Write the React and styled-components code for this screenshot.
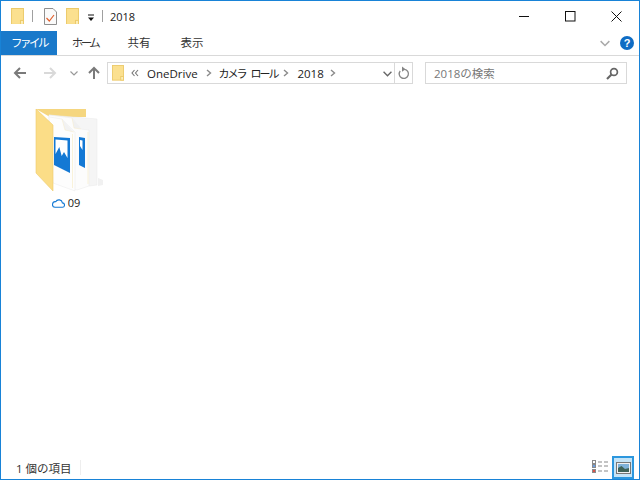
import styled, { createGlobalStyle } from "styled-components";

const GlobalStyle = createGlobalStyle`
  html, body {
    margin: 0;
    padding: 0;
    background: #fff;
  }
  body {
    font-family: "Open Sans", "Noto Sans CJK JP", sans-serif;
  }
`;

const FolderIcon = ({ size = 13 }) => (
  <svg width={size} height={size * 1.3} viewBox="0 0 13 17">
    <rect x="0.5" y="0.5" width="12" height="16" fill="#fbe08f" stroke="#ecca6a" />
    <rect x="9.5" y="12.5" width="3" height="4" fill="#fdeeb8" stroke="#ecca6a" />
  </svg>
);

const TaskIcon = () => (
  <svg width="13" height="17" viewBox="0 0 13 17">
    <path d="M.5.5H9L12.5 4V16.5H.5Z" fill="#fafafa" stroke="#8f8f8f" />
    <path d="M2.5 10L5.3 13L10 7" fill="none" stroke="#e2622f" strokeWidth="1.2" />
  </svg>
);

const DropIcon = () => (
  <svg width="8" height="8" viewBox="0 0 8 8">
    <path d="M1 1H7" stroke="#111" strokeWidth="1" />
    <path d="M1 3.5H7L4 7Z" fill="#111" />
  </svg>
);

const BigFolder = () => (
  <svg width="70" height="84" viewBox="0 0 70 84">
    <path d="M1 1H51V9H15Z" fill="#f5d67f" />
    <path d="M63 78L68 77V72L63 70Z" fill="#f1f1f1" />
    <path d="M14 7L62 11V77L54 78L30 50Z" fill="#f5f5f5" stroke="#e9e9e9" strokeWidth="0.5" />
    <path d="M14 7L37 10L46 21L54 22V78L42 82L14 70Z" fill="#fcfcfc" stroke="#ebebeb" strokeWidth="0.5" />
    <path d="M37 10L39 20L46 21" fill="#f0f0f0" stroke="#f6edd0" strokeWidth="0.6" />
    <path d="M53 24V76" stroke="#f8f0d6" strokeWidth="0.9" />
    <path d="M44 29L50 30V60L44 57Z" fill="#1479d4" />
    <path d="M45 32L47.5 32.5V42L45 38Z" fill="#fff" />
    <path d="M14 9L27 11L40 24V83L18 75Z" fill="#fdfdfd" stroke="#ebebeb" strokeWidth="0.5" />
    <path d="M27 11L30 22L39 24" fill="#f2f2f2" stroke="#f6edd0" strokeWidth="0.6" />
    <path d="M37.5 26V80" stroke="#f8f0d6" strokeWidth="0.9" />
    <path d="M19 29L35 30V65L19 57Z" fill="#1479d4" />
    <path d="M20.5 31.5L32.5 32.5V50L29 44L26.7 48L24.3 39L20.5 46Z" fill="#fff" />
    <path d="M1 1L18 17V83L1 65Z" fill="#fbdd87" stroke="#efcb6c" strokeWidth="0.6" />
  </svg>
);

const ArrowIcon = ({ $dir = "left", color = "#7a7a7a" }) => {
  const d = {
    left: "M13 7H2M7 2L2 7L7 12",
    right: "M1 7H12M7 2L12 7L7 12",
    up: "M7 13V2M2 7L7 2L12 7",
  }[$dir];
  return (
    <svg width="14" height="14" viewBox="0 0 14 14">
      <path d={d} fill="none" stroke={color} strokeWidth="2" />
    </svg>
  );
};

const Chevron = ({ size = 8, color = "#888" }) => (
  <svg width={size} height={size} viewBox="0 0 8 8">
    <path d="M0.5 2.5L4 6L7.5 2.5" fill="none" stroke={color} strokeWidth="1.2" />
  </svg>
);

const Crumb = () => (
  <svg width="6" height="8" viewBox="0 0 6 8">
    <path d="M1 1L4.5 4L1 7" fill="none" stroke="#8a8a8a" strokeWidth="1.4" />
  </svg>
);

const DoubleCrumb = () => (
  <svg width="8" height="8" viewBox="0 0 8 8">
    <path d="M3.5 1L1 4L3.5 7M7 1L4.5 4L7 7" fill="none" stroke="#777" strokeWidth="1.1" />
  </svg>
);

const Refresh = () => (
  <svg width="13" height="14" viewBox="0 0 13 14">
    <path d="M7.5 3.3A4.6 4.6 0 1 1 3.2 5" fill="none" stroke="#858585" strokeWidth="1.3" />
    <path d="M5 .5L8.5 3.3L5 5.8Z" fill="#858585" />
  </svg>
);

const Magnifier = () => (
  <svg width="13" height="13" viewBox="0 0 13 13">
    <circle cx="8" cy="5" r="3.4" fill="none" stroke="#666" strokeWidth="1.7" />
    <path d="M5.5 7.5L1 12" stroke="#666" strokeWidth="2.1" />
  </svg>
);

const Cloud = () => (
  <svg width="13" height="10" viewBox="0 0 13 10">
    <path
      d="M3 9.3H10.2A2.2 2.2 0 0 0 10.4 4.9A3.6 3.6 0 0 0 3.7 3.7A2.8 2.8 0 0 0 3 9.3Z"
      fill="none"
      stroke="#1479d4"
      strokeWidth="1.1"
    />
  </svg>
);

const DetailsView = () => (
  <svg width="17" height="13" viewBox="0 0 17 13">
    <rect x="0.5" y="0.5" width="3" height="3" fill="#fff" stroke="#8a8a8a" />
    <rect x="0.5" y="4.5" width="3" height="3" fill="#6d9fe0" stroke="#8a8a8a" />
    <rect x="0.5" y="9.5" width="3" height="3" fill="#d9534a" stroke="#8a8a8a" />
    <path d="M6 2H10M12 2H16M6 6H10M12 6H16M6 11H10M12 11H16" stroke="#8a8a8a" strokeWidth="1.2" />
  </svg>
);

const LargeView = () => (
  <svg width="15" height="12" viewBox="0 0 15 12">
    <rect x="0.5" y="0.5" width="14" height="11" fill="#f1f1f1" stroke="#777" />
    <rect x="2" y="2" width="11" height="8" fill="#7fb2d9" />
    <path d="M2 10V6L5.5 4L9 7L13 6V10Z" fill="#3f6358" />
  </svg>
);

const Window = styled.div`
  width: 640px;
  height: 480px;
  box-sizing: border-box;
  border: 1px solid #1883d7;
  background: #fff;
  display: flex;
  flex-direction: column;
  overflow: hidden;
  color: #1a1a1a;
`;

const TitleBar = styled.div`
  height: 30px;
  display: flex;
  align-items: center;
  padding-left: 10px;
  flex: none;
`;

const QuickSlot = styled.div`
  display: flex;
  align-items: center;
  justify-content: center;
  width: ${(p) => p.$w || 13}px;
  margin-right: ${(p) => p.$mr || 0}px;
  padding-top: ${(p) => p.$pt || 0}px;
`;

const TitleSep = styled.div`
  width: 1px;
  height: 12px;
  background: #a0a0a0;
  margin-right: ${(p) => p.$mr}px;
`;

const TitleText = styled.span`
  font-size: 11px;
  flex: 1;
`;

const WinButton = styled.div`
  width: 46px;
  height: 30px;
  display: flex;
  align-items: center;
  justify-content: center;
`;

const RibbonTabs = styled.div`
  height: 24px;
  display: flex;
  align-items: stretch;
  border-bottom: 1px solid #d9d9d9;
  flex: none;
`;

const Tab = styled.div`
  width: ${(p) => p.$w}px;
  box-sizing: border-box;
  padding-bottom: 2px;
  display: flex;
  align-items: center;
  justify-content: center;
  font-size: 11.5px;
  letter-spacing: ${(p) => (p.$kana ? "-2.5px" : "0")};
  font-family: "Noto Sans CJK JP", sans-serif;
  background: ${(p) => (p.$active ? "#1979ca" : "transparent")};
  color: ${(p) => (p.$active ? "#fff" : "#333")};
`;

const RibbonRight = styled.div`
  margin-left: auto;
  display: flex;
  align-items: center;
  gap: 10px;
  padding-right: 5px;
`;

const Help = styled.div`
  width: 14px;
  height: 14px;
  border-radius: 50%;
  background: #0f6cc4;
  color: #fff;
  font: bold 11px "Liberation Sans", sans-serif;
  display: flex;
  align-items: center;
  justify-content: center;
`;

const NavRow = styled.div`
  height: 22px;
  margin-top: 6px;
  display: flex;
  align-items: center;
  flex: none;
`;

const NavButton = styled.div`
  width: ${(p) => p.$w}px;
  display: flex;
  justify-content: center;
`;

const AddressBox = styled.div`
  width: 306px;
  height: 22px;
  box-sizing: border-box;
  border: 1px solid #d9d9d9;
  display: flex;
  align-items: center;
  margin-left: 4px;
  padding-left: 4px;
`;

const Path = styled.div`
  flex: 1;
  display: flex;
  align-items: center;
  font-size: 11.5px;
  font-family: "Open Sans", "Noto Sans CJK JP", sans-serif;
  color: #222;
`;

const PathText = styled.span`
  margin-left: ${(p) => p.$ml || 0}px;
  font-size: ${(p) => (p.$kana ? "11px" : "inherit")};
  letter-spacing: ${(p) => (p.$kana ? "-2px" : "0")};
  word-spacing: ${(p) => (p.$kana ? "4px" : "0")};
  white-space: pre;
`;

const CrumbSlot = styled.span`
  display: flex;
  margin-left: ${(p) => p.$ml}px;
`;

const AddressEnd = styled.div`
  width: 17px;
  height: 20px;
  display: flex;
  align-items: center;
  justify-content: center;
  border-left: 1px solid #d9d9d9;
`;

const ComboArrow = styled.div`
  width: 14px;
  display: flex;
  justify-content: center;
`;

const SearchBox = styled.div`
  width: 202px;
  height: 22px;
  box-sizing: border-box;
  margin-left: 12px;
  border: 1px solid #d9d9d9;
  display: flex;
  align-items: center;
  justify-content: space-between;
  padding: 0 7px 0 8px;
  font-size: 11.5px;
  color: #777;
`;

const Content = styled.div`
  flex: 1;
  padding: 24px 0 0 26px;
`;

const Item = styled.div`
  width: 78px;
  display: flex;
  flex-direction: column;
  align-items: flex-start;
`;

const IconWrap = styled.div`
  height: 84px;
  padding-left: 8px;
`;

const ItemLabel = styled.div`
  width: 78px;
  display: flex;
  align-items: center;
  justify-content: center;
  gap: 3px;
  font-size: 11px;
  margin-top: 3px;
`;

const StatusBar = styled.div`
  height: 23px;
  display: flex;
  align-items: center;
  flex: none;
`;

const StatusText = styled.div`
  font-size: 11.5px;
  margin-left: 15px;
  width: 64px;
  color: #333;
`;

const StatusSep = styled.div`
  width: 1px;
  height: 15px;
  background: #eee;
`;

const ViewButtons = styled.div`
  margin-left: auto;
  display: flex;
  align-items: flex-end;
  padding-right: 5px;
`;

const ViewButton = styled.div`
  width: 22px;
  height: 23px;
  box-sizing: border-box;
  display: flex;
  align-items: center;
  justify-content: center;
  margin-left: 1px;
  padding-bottom: ${(p) => (p.$active ? "0" : "3px")};
  border: 2px solid ${(p) => (p.$active ? "#2c97de" : "transparent")};
  background: ${(p) => (p.$active ? "#c5e4f7" : "transparent")};
`;

const App = () => {
  return (
    <>
      <GlobalStyle />
      <Window>
        <TitleBar>
          <QuickSlot $mr={8}><FolderIcon /></QuickSlot>
          <TitleSep $mr={11} />
          <QuickSlot $mr={9}><TaskIcon /></QuickSlot>
          <QuickSlot $mr={7}><FolderIcon /></QuickSlot>
          <QuickSlot $w={10} $mr={6} $pt={3}><DropIcon /></QuickSlot>
          <TitleSep $mr={7} />
          <TitleText>2018</TitleText>
          <WinButton>
            <svg width="11" height="11" viewBox="0 0 11 11">
              <path d="M0 5.5H10" stroke="#111" />
            </svg>
          </WinButton>
          <WinButton>
            <svg width="11" height="11" viewBox="0 0 11 11">
              <rect x="0.5" y="0.5" width="9.5" height="9.5" fill="none" stroke="#111" />
            </svg>
          </WinButton>
          <WinButton>
            <svg width="11" height="11" viewBox="0 0 11 11">
              <path d="M.5.5L10.5 10.5M10.5.5L.5 10.5" stroke="#111" />
            </svg>
          </WinButton>
        </TitleBar>
        <RibbonTabs>
          <Tab $active $kana $w={56}>ファイル</Tab>
          <Tab $kana $w={56}>ホーム</Tab>
          <Tab $w={52}>共有</Tab>
          <Tab $w={54}>表示</Tab>
          <RibbonRight>
            <Chevron size={10} color="#aaa" />
            <Help>?</Help>
          </RibbonRight>
        </RibbonTabs>
        <NavRow>
          <NavButton $w={37}><ArrowIcon $dir="left" /></NavButton>
          <NavButton $w={24}><ArrowIcon $dir="right" color="#d9d9d9" /></NavButton>
          <NavButton $w={23}><Chevron color="#999" /></NavButton>
          <NavButton $w={18}><ArrowIcon $dir="up" /></NavButton>
          <AddressBox>
            <FolderIcon size={12} />
            <Path>
              <CrumbSlot $ml={7}><DoubleCrumb /></CrumbSlot>
              <PathText $ml={8}>OneDrive</PathText>
              <CrumbSlot $ml={8}><Crumb /></CrumbSlot>
              <PathText $ml={7} $kana>カメラ ロール</PathText>
              <CrumbSlot $ml={6}><Crumb /></CrumbSlot>
              <PathText $ml={8}>2018</PathText>
              <CrumbSlot $ml={6}><Crumb /></CrumbSlot>
            </Path>
            <ComboArrow><Chevron size={9} color="#666" /></ComboArrow>
            <AddressEnd><Refresh /></AddressEnd>
          </AddressBox>
          <SearchBox>
            <span>2018の検索</span>
            <Magnifier />
          </SearchBox>
        </NavRow>
        <Content>
          <Item>
            <IconWrap><BigFolder /></IconWrap>
            <ItemLabel><Cloud />09</ItemLabel>
          </Item>
        </Content>
        <StatusBar>
          <StatusText>1 個の項目</StatusText>
          <StatusSep />
          <ViewButtons>
            <ViewButton><DetailsView /></ViewButton>
            <ViewButton $active><LargeView /></ViewButton>
          </ViewButtons>
        </StatusBar>
      </Window>
    </>
  );
};

export default App;
